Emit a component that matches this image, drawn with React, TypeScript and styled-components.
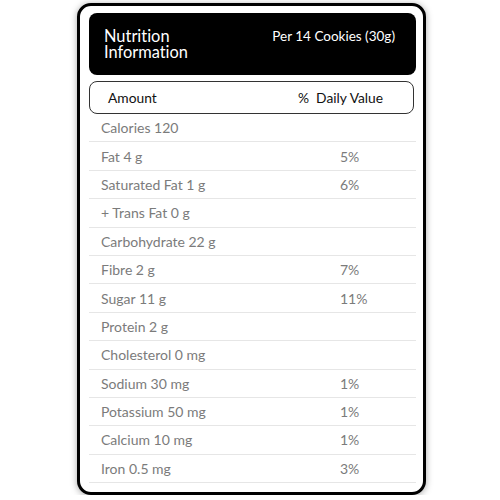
import React from "react";
import styled, { createGlobalStyle } from "styled-components";

const Global = createGlobalStyle`
  html, body { margin: 0; padding: 0; background: #fff; }
  body {
    font-family: Lato, "Open Sans", sans-serif;
    font-variant-ligatures: none;
    font-feature-settings: "liga" 0, "dlig" 0;
  }
`;

const Page = styled.div`
  padding: 3px 0 0 77px;
`;

const Card = styled.div`
  box-sizing: border-box;
  width: 349px;
  height: 492px;
  border: 3px solid #000;
  border-radius: 14px;
  background: #fff;
  box-shadow: 0 1px 7px rgba(0, 0, 0, 0.35);
  padding: 7px 7px 0 9px;
  display: flex;
  flex-direction: column;
`;

const Header = styled.div`
  background: #000;
  color: #fff;
  border-radius: 8px;
  height: 62px;
  box-sizing: border-box;
  padding: 15px 21px 0 15px;
  display: flex;
  justify-content: space-between;
  align-items: flex-start;
`;

const Title = styled.div`
  font-size: 16.4px;
  line-height: 16px;
  width: 100px;
`;

const Serving = styled.div`
  font-size: 13.5px;
  line-height: 16px;
`;

const ColumnHead = styled.div`
  margin-top: 6px;
  height: 33px;
  width: 325px;
  box-sizing: border-box;
  border: 1px solid #333;
  border-radius: 8px;
  display: grid;
  grid-template-columns: 190px 1fr;
  align-items: center;
  padding-left: 18px;
  font-size: 13.8px;
  color: #111;
`;

const List = styled.div`
  display: flex;
  flex-direction: column;
`;

const Row = styled.div`
  box-sizing: border-box;
  height: 28.4px;
  border-bottom: 1px solid #e6e6e6;
  display: grid;
  grid-template-columns: 239px 1fr;
  align-items: center;
  padding-left: 12px;
  font-size: 14px;
  color: #7b7b7b;
`;

const rows: [string, string][] = [
  ["Calories 120", ""],
  ["Fat 4 g", "5%"],
  ["Saturated Fat 1 g", "6%"],
  ["+ Trans Fat 0 g", ""],
  ["Carbohydrate 22 g", ""],
  ["Fibre 2 g", "7%"],
  ["Sugar 11 g", "11%"],
  ["Protein 2 g", ""],
  ["Cholesterol 0 mg", ""],
  ["Sodium 30 mg", "1%"],
  ["Potassium 50 mg", "1%"],
  ["Calcium 10 mg", "1%"],
  ["Iron 0.5 mg", "3%"],
];

export default function App() {
  return (
    <Page>
      <Global />
      <Card>
        <Header>
          <Title>Nutrition Information</Title>
          <Serving>Per 14 Cookies (30g)</Serving>
        </Header>
        <ColumnHead>
          <span>Amount</span>
          <span>%&nbsp; Daily Value</span>
        </ColumnHead>
        <List>
          {rows.map(([name, value]) => (
            <Row key={name}>
              <span>{name}</span>
              <span>{value}</span>
            </Row>
          ))}
        </List>
      </Card>
    </Page>
  );
}
